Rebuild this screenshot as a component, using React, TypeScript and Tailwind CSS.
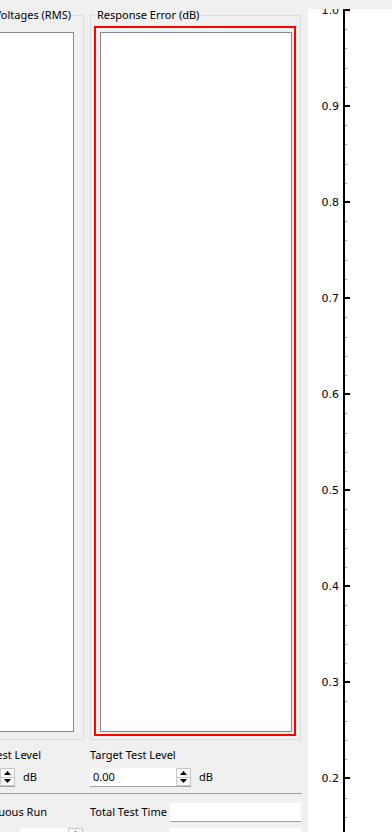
import type { ReactNode } from 'react';

const MAJORS = [1.0, 0.9, 0.8, 0.7, 0.6, 0.5, 0.4, 0.3, 0.2];

function GroupBox({
  title,
  titleSide,
  className,
  children,
}: {
  title: string;
  titleSide: string;
  className: string;
  children: ReactNode;
}) {
  return (
    <div className={`relative shrink-0 border border-[#dcdcdc] ${className}`}>
      <span className={`absolute top-[-9px] h-[16px] leading-[16px] px-[2px] bg-[#f0f0f0] whitespace-nowrap ${titleSide}`}>
        {title}
      </span>
      {children}
    </div>
  );
}

function Arrow({ up }: { up?: boolean }) {
  return (
    <svg width="7" height="4" viewBox="0 0 7 4">
      <path d={up ? 'M0 4h7L3.5 0z' : 'M0 0h7L3.5 4z'} fill="#000" />
    </svg>
  );
}

function Spinner() {
  return (
    <div className="w-[15px] h-[18px] flex flex-col border border-[#c8c8c8] bg-[#fbfbfb]">
      <div className="flex-1 flex items-center justify-center border-b border-[#c8c8c8]">
        <Arrow up />
      </div>
      <div className="flex-1 flex items-center justify-center">
        <Arrow />
      </div>
    </div>
  );
}

function SpinBox({ value, editClass }: { value: string; editClass: string }) {
  return (
    <div className="flex items-start border-b border-[#a0a0a0]">
      <div className={`h-[18px] bg-white leading-[18px] pl-[3px] ${editClass}`}>{value}</div>
      <Spinner />
    </div>
  );
}

function Axis() {
  const minors: number[] = [];
  for (let j = 0; j < 44; j++) {
    if (j % 5 !== 0) minors.push(Math.round(1 + j * 19.208));
  }
  return (
    <svg width="84" height="823" className="block">
      <line x1="36" y1="0" x2="36" y2="823" stroke="#000" strokeWidth="2" />
      {minors.map((y) => (
        <line key={y} x1="37" x2="39" y1={y + 0.5} y2={y + 0.5} stroke="#a0a0a0" strokeWidth="1" />
      ))}
      {MAJORS.map((v, k) => {
        const y = Math.round(1 + k * 96.04);
        return (
          <g key={v}>
            <line x1="37" x2="42" y1={y} y2={y} stroke="#000" strokeWidth="2" />
            <text
              x="31"
              y={y + 4}
              textAnchor="end"
              fontSize="11"
              fontFamily="'DejaVu Sans', Verdana, sans-serif"
              fill="#000"
            >
              {v.toFixed(1)}
            </text>
          </g>
        );
      })}
    </svg>
  );
}

export default function App() {
  return (
    <div className="w-[392px] h-[832px] overflow-hidden bg-[#f0f0f0] flex font-['Noto_Sans',sans-serif] text-[11px] text-black">
      {/* left form panel, scrolled slightly so its left edge is cut */}
      <div className="w-[316px] shrink-0 ml-[-8px] pt-[15px] flex flex-col">
        <div className="flex">
          <GroupBox title="Voltages (RMS)" titleSide="right-[10px]" className="w-[92px] pt-[16px] pr-[9px] pb-[7px]">
            <div className="h-[700px] bg-white border border-[#828790]" />
          </GroupBox>
          <GroupBox title="Response Error (dB)" titleSide="left-[4px]" className="ml-[6px] w-[211px] pt-[10px] pl-[3px] pr-[4px] pb-[3px]">
            <div className="border-2 border-[#ff0000] pt-[4px] pl-[4px] pr-[2px] pb-[2px]">
              <div className="h-[700px] bg-white border border-[#828790]" />
            </div>
          </GroupBox>
        </div>

        <div className="mt-[7px] grid grid-cols-[98px_1fr]">
          <div className="w-[49px] h-[16px] leading-[16px] flex justify-end whitespace-nowrap">Test Level</div>
          <div className="h-[16px] leading-[16px] whitespace-nowrap">Target Test Level</div>

          <div className="mt-[5px] flex items-center">
            <div className="ml-[-78px]">
              <SpinBox value="0.00" editClass="w-[86px]" />
            </div>
            <span className="ml-[8px]">dB</span>
          </div>
          <div className="mt-[5px] flex items-center">
            <SpinBox value="0.00" editClass="w-[86px]" />
            <span className="ml-[8px]">dB</span>
          </div>

          <div className="col-span-2 mt-[6px] mr-[6px] h-px bg-[#a0a0a0]" />

          <div className="mt-[9px] h-[19px] w-[55px] flex items-center justify-end whitespace-nowrap">Continuous Run</div>
          <div className="mt-[9px] flex items-center">
            <span className="w-[80px] whitespace-nowrap">Total Test Time</span>
            <div className="w-[131px] h-[19px] bg-white border-b border-[#a0a0a0]" />
          </div>

          <div className="mt-[6px] flex items-start">
            <div className="ml-[28px]">
              <SpinBox value="" editClass="w-[48px]" />
            </div>
          </div>
          <div className="mt-[6px] flex items-start">
            <span className="w-[80px] whitespace-nowrap leading-[19px]">Elapsed Time</span>
            <div className="w-[131px] h-[19px] bg-white border-b border-[#a0a0a0]" />
          </div>
        </div>
      </div>

      {/* plot area */}
      <div className="flex-1 pt-[9px]">
        <div className="h-[823px] bg-white overflow-hidden">
          <Axis />
        </div>
      </div>
    </div>
  );
}
